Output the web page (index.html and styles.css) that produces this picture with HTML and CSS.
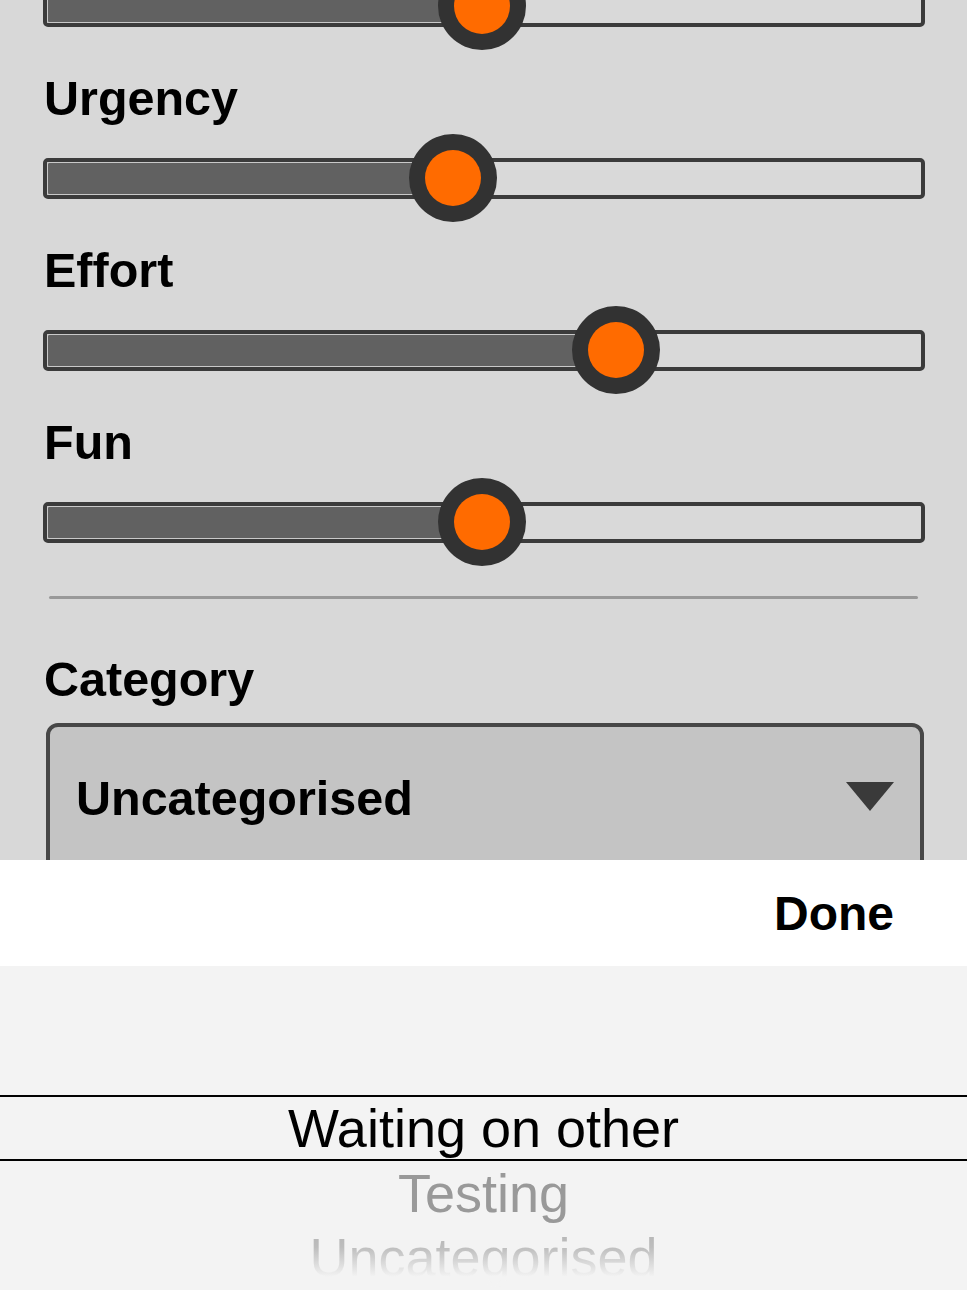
FILE: index.html
```html
<!DOCTYPE html>
<html lang="en">
<head>
<meta charset="utf-8">
<title>Task details</title>
<link rel="stylesheet" href="styles.css">
</head>
<body>
<main class="form">
  <div class="field field-cut">
    <div class="slider">
      <div class="track" style="--pos: 49.8%">
        <div class="fill"></div>
        <div class="thumb"><span class="thumb-core"></span></div>
      </div>
    </div>
  </div>

  <div class="field">
    <label class="label">Urgency</label>
    <div class="slider">
      <div class="track" style="--pos: 46.4%">
        <div class="fill"></div>
        <div class="thumb"><span class="thumb-core"></span></div>
      </div>
    </div>
  </div>

  <div class="field">
    <label class="label">Effort</label>
    <div class="slider">
      <div class="track" style="--pos: 65.1%">
        <div class="fill"></div>
        <div class="thumb"><span class="thumb-core"></span></div>
      </div>
    </div>
  </div>

  <div class="field">
    <label class="label">Fun</label>
    <div class="slider">
      <div class="track" style="--pos: 49.8%">
        <div class="fill"></div>
        <div class="thumb"><span class="thumb-core"></span></div>
      </div>
    </div>
  </div>

  <hr class="divider">

  <div class="field field-select">
    <label class="label">Category</label>
    <div class="select">
      <span class="select-value">Uncategorised</span>
      <svg class="select-arrow" width="48" height="29" viewBox="0 0 48 29"><polygon points="0,0 48,0 24,29" fill="#3a3a3a"/></svg>
    </div>
  </div>
</main>

<div class="sheet">
  <div class="toolbar">
    <span class="done">Done</span>
  </div>
  <div class="picker">
    <div class="picker-row picker-selected">Waiting on other</div>
    <div class="picker-row picker-near">Testing</div>
    <div class="picker-row picker-far">Uncategorised</div>
  </div>
</div>
</body>
</html>
```

FILE: styles.css
```css
html, body {
  margin: 0;
  padding: 0;
}

body {
  background: #d8d8d8;
  font-family: "Liberation Sans", Arial, Helvetica, sans-serif;
  color: #000;
  overflow: hidden;
  height: 1290px;
}

.form {
  display: flex;
  flex-direction: column;
  padding: 0 42px 0 43px;
  margin-top: -38px;
}

.field {
  display: flex;
  flex-direction: column;
  gap: 8px;
  margin-bottom: 20px;
}

.label {
  font-weight: bold;
  font-size: 48.5px;
  line-height: 56px;
  height: 56px;
  padding-left: 1px;
}

.slider {
  height: 88px;
  display: flex;
  align-items: center;
}

.track {
  position: relative;
  box-sizing: border-box;
  width: 100%;
  height: 41px;
  border: 4px solid #3b3b3b;
  border-radius: 5px;
  background: #d9d9d9;
}

.fill {
  width: var(--pos);
  height: 100%;
  box-sizing: border-box;
  background: #616161;
  border: 1px solid #c9c9c9;
  border-right: none;
  border-radius: 2px 0 0 2px;
}

.thumb {
  position: absolute;
  top: 50%;
  left: var(--pos);
  width: 88px;
  height: 88px;
  margin: -44px 0 0 -44px;
  border-radius: 50%;
  background: #323232;
  display: flex;
  align-items: center;
  justify-content: center;
}

.thumb-core {
  width: 56px;
  height: 56px;
  border-radius: 50%;
  background: #ff6b00;
}

.divider {
  border: none;
  height: 3px;
  background: #999999;
  border-radius: 2px;
  margin: 10px 7px 0 6px;
}

.field-select {
  margin-top: 52px;
  gap: 16px;
}

.select {
  box-sizing: border-box;
  height: 152px;
  margin: 0 1px 0 3px;
  border: 4px solid #474747;
  border-radius: 12px;
  background: #c4c4c4;
  display: flex;
  align-items: flex-start;
  justify-content: space-between;
  padding: 43px 26px 0 26px;
}

.select-value {
  font-weight: bold;
  font-size: 48.5px;
  line-height: 56px;
}

.select-arrow {
  margin-top: 12px;
  display: block;
}

.sheet {
  position: fixed;
  left: 0;
  right: 0;
  bottom: 0;
  height: 430px;
  display: flex;
  flex-direction: column;
}

.toolbar {
  height: 106px;
  background: #ffffff;
  display: flex;
  align-items: center;
  justify-content: flex-end;
  padding-right: 73px;
}

.done {
  font-weight: bold;
  font-size: 48px;
}

.picker {
  flex: 1;
  background: #f3f3f3;
  padding-top: 129px;
  display: flex;
  flex-direction: column;
  text-align: center;
  font-size: 54px;
}

.picker-row {
  height: 64px;
  line-height: 64px;
}

.picker-selected {
  height: 62px;
  line-height: 62px;
  border-top: 2px solid #000;
  border-bottom: 2px solid #000;
  color: #000;
}

.picker-near {
  color: #999999;
}

.picker-far {
  align-self: center;
  background: linear-gradient(to bottom, #b2b2b2 0px, #bdbdbd 22px, #f3f3f3 52px);
  -webkit-background-clip: text;
  background-clip: text;
  color: transparent;
}
```
